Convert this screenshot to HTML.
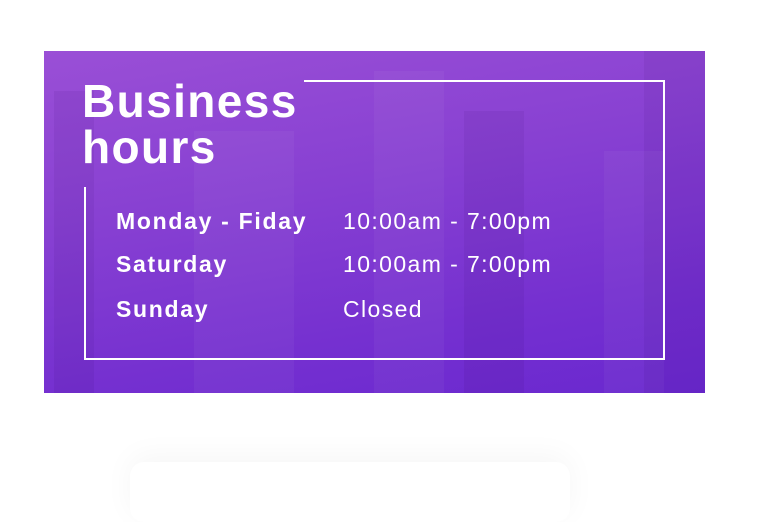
<!DOCTYPE html>
<html><head><style>
html,body{margin:0;padding:0;width:768px;height:465px;background:#fff;overflow:hidden;font-family:"Liberation Sans",sans-serif}
.panel{position:absolute;left:44px;top:51px;width:661px;height:342px;
background:linear-gradient(170deg,#9a4fd6 0%,#8740d2 40%,#7530d0 75%,#6a28cf 100%);overflow:hidden}
.b{position:absolute;background:rgba(255,255,255,0.04)}
.d{position:absolute;background:rgba(40,0,90,0.07)}
.l{position:absolute;background:#fff}
.t{position:absolute;color:#fff;font-weight:bold;font-size:46px;line-height:46px;letter-spacing:1.4px}
.k{position:absolute;color:#fff;font-size:23px;font-weight:bold;left:116px;letter-spacing:1.7px}
.v{position:absolute;color:#fff;font-size:23px;left:343px;letter-spacing:1.4px}
.card{position:absolute;left:130px;top:462px;width:440px;height:60px;border-radius:14px;background:#fff;box-shadow:0 -6px 30px rgba(0,0,0,0.04)}
</style></head><body>
<div class="panel">
<div class="b" style="left:150px;top:80px;width:100px;height:262px"></div>
<div class="d" style="left:10px;top:40px;width:40px;height:302px"></div>
<div class="b" style="left:330px;top:20px;width:70px;height:322px"></div>
<div class="d" style="left:420px;top:60px;width:60px;height:282px"></div>
<div class="b" style="left:560px;top:100px;width:60px;height:242px"></div>
<div class="d" style="left:600px;top:0;width:61px;height:342px"></div>
</div>
<div class="l" style="left:304px;top:80px;width:361px;height:2px"></div>
<div class="l" style="left:663px;top:80px;width:2px;height:280px"></div>
<div class="l" style="left:85px;top:358px;width:580px;height:2px"></div>
<div class="l" style="left:84px;top:187px;width:2px;height:173px"></div>
<div class="t" style="left:82px;top:78px">Business</div>
<div class="t" style="left:82px;top:124px">hours</div>
<div class="k" style="top:208px">Monday - Fiday</div>
<div class="v" style="top:208px">10:00am - 7:00pm</div>
<div class="k" style="top:251px">Saturday</div>
<div class="v" style="top:251px">10:00am - 7:00pm</div>
<div class="k" style="top:296px">Sunday</div>
<div class="v" style="top:296px">Closed</div>
<div class="card"></div>
</body></html>
